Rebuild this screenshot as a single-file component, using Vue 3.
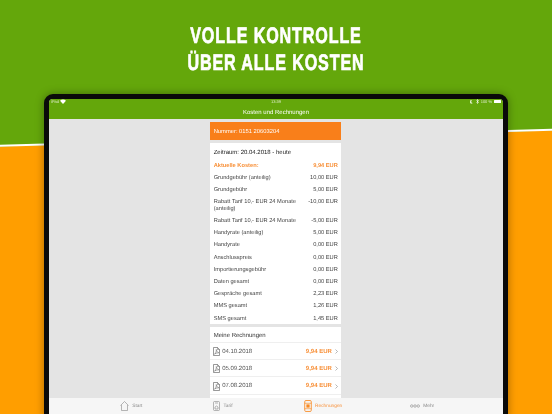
<script setup>
const rows = [
  { label: 'Grundgebühr (anteilig)', value: '10,00 EUR' },
  { label: 'Grundgebühr', value: '5,00 EUR' },
  { label: 'Rabatt Tarif 10,- EUR 24 Monate (anteilig)', value: '-10,00 EUR', tall: true },
  { label: 'Rabatt Tarif 10,- EUR 24 Monate', value: '-5,00 EUR' },
  { label: 'Handyrate (anteilig)', value: '5,00 EUR' },
  { label: 'Handyrate', value: '0,00 EUR' },
  { label: 'Anschlusspreis', value: '0,00 EUR' },
  { label: 'Importierungsgebühr', value: '0,00 EUR' },
  { label: 'Daten gesamt', value: '0,00 EUR' },
  { label: 'Gespräche gesamt', value: '2,23 EUR' },
  { label: 'MMS gesamt', value: '1,26 EUR' },
  { label: 'SMS gesamt', value: '1,45 EUR' }
]
const bills = ['04.10.2018', '05.09.2018', '07.08.2018']
</script>

<template>
  <div class="page">
    <svg class="backdrop" viewBox="0 0 552 414" preserveAspectRatio="none" aria-hidden="true">
      <rect width="552" height="414" fill="#64a70b" />
      <polygon points="0,146.500 552,130.500 552,414 0,414" fill="#ff9e00" />
      <polygon points="0,144.800 552,128.800 552,130.800 0,146.800" fill="#ffffff" />
    </svg>

    <h1 class="headline">VOLLE KONTROLLE<br />ÜBER ALLE KOSTEN</h1>

    <div class="tablet">
      <div class="screen">
        <header class="appbar">
          <div class="status">
            <span class="status-left">
              iPad
              <svg width="6" height="5" viewBox="0 0 12 10"><path d="M0 3.500C3.500 0 8.500 0 12 3.500L6 10Z" fill="#fff" /></svg>
            </span>
            <span class="status-time">13:39</span>
            <span class="status-right">
              <svg class="moon" width="3" height="4" viewBox="0 0 6 8"><path d="M4 0.500A3.500 3.500 0 1 0 5.500 6 3 3 0 0 1 4 0.500Z" fill="#dfeccb" /></svg>
              <svg width="3" height="5" viewBox="0 0 6 10"><path d="M1 2.500 5 7 3 9V1L5 3 1 7.500" fill="none" stroke="#fff" stroke-width="1.2" /></svg>
              100 %
              <i class="battery"></i>
            </span>
          </div>
          <div class="navtitle">Kosten und Rechnungen</div>
        </header>

        <main class="content">
          <div class="column">
            <div class="number">Nummer: 0151 20603204</div>

            <section class="card costs">
              <div class="period">Zeitraum: 20.04.2018 - heute</div>
              <div class="row accent"><span>Aktuelle Kosten:</span><span>9,94 EUR</span></div>
              <div v-for="r in rows" :key="r.label" class="row" :class="{ tall: r.tall }">
                <span class="row-label">{{ r.label }}</span><span class="row-value">{{ r.value }}</span>
              </div>
            </section>

            <section class="card bills">
              <div class="bills-title">Meine Rechnungen</div>
              <div v-for="b in bills" :key="b" class="bill">
                <svg class="pdf" width="7" height="9" viewBox="0 0 14 18">
                  <path d="M1 1h8l4 4v12H1Z" fill="#fff" stroke="#555" stroke-width="1.2" />
                  <path d="M9 1v4h4M3 14c3-1 4-6 3.500-9 1 3 2.500 6 5 6.500-3 0-6 1-8.500 2.500Z" fill="none" stroke="#555" stroke-width="1" />
                </svg>
                <span class="bill-date">{{ b }}</span>
                <span class="bill-price">9,94 EUR</span>
                <svg class="chev" width="3" height="5" viewBox="0 0 6 10"><path d="M1 1l4 4-4 4" fill="none" stroke="#888" stroke-width="1.2" /></svg>
              </div>
            </section>
          </div>
        </main>

        <nav class="tabs">
          <div class="tab">
            <svg width="9" height="10" viewBox="0 0 18 20"><path d="M1 9 9 1l8 8M3 8v11h12V8" fill="none" stroke="#888" stroke-width="1.2" /></svg>
            <span>Start</span>
          </div>
          <div class="tab">
            <svg width="7" height="10" viewBox="0 0 14 20"><rect x="1" y="1" width="12" height="18" rx="2" fill="none" stroke="#888" stroke-width="1.2" /><path d="M4 4h6M4 16v-4l3-2 3 2v4Z" fill="none" stroke="#888" stroke-width="1.2" /></svg>
            <span>Tarif</span>
          </div>
          <div class="tab active">
            <svg width="8" height="12" viewBox="0 0 14 22"><rect x="1" y="1" width="12" height="20" rx="2" fill="none" stroke="#f98a22" stroke-width="1.6" /><path d="M1 6h12M1 16h12" stroke="#f98a22" stroke-width="1.2" /><rect x="4" y="8" width="6" height="6" fill="#f98a22" /></svg>
            <span>Rechnungen</span>
          </div>
          <div class="tab">
            <svg width="10" height="4" viewBox="0 0 20 8"><circle cx="3.500" cy="4" r="2.500" fill="none" stroke="#888" stroke-width="1.2" /><circle cx="10" cy="4" r="2.500" fill="none" stroke="#888" stroke-width="1.2" /><circle cx="16.500" cy="4" r="2.500" fill="none" stroke="#888" stroke-width="1.2" /></svg>
            <span>Mehr</span>
          </div>
        </nav>
      </div>
    </div>
  </div>
</template>

<style>
html, body { margin: 0; padding: 0; }
</style>

<style scoped>
.page {
  position: relative;
  width: 552px;
  height: 414px;
  overflow: hidden;
  display: flex;
  flex-direction: column;
  font-family: "Liberation Sans", Arial, sans-serif;
  text-rendering: geometricPrecision;
}
.backdrop {
  position: absolute;
  inset: 0;
  width: 552px;
  height: 414px;
}
.headline {
  position: relative;
  flex: none;
  margin: 0;
  height: 93.500px;
  padding-top: 23.300px;
  box-sizing: border-box;
  text-align: center;
  font-size: 22.400px;
  line-height: 26.400px;
  font-weight: 700;
  letter-spacing: 1.200px;
  color: #fff;
  -webkit-text-stroke: 0.700px #fff;
  transform: scaleX(0.72);
  filter: blur(0.3px);
}
.tablet {
  position: relative;
  flex: none;
  margin-left: 44px;
  width: 464px;
  height: 330px;
  box-sizing: border-box;
  border: 5px solid #0a0a0a;
  border-radius: 9px;
  background: #e4e4e4;
  box-shadow: 0 0 9px rgba(0, 0, 0, 0.35);
  overflow: hidden;
}
.screen {
  height: 315.500px;
  display: flex;
  flex-direction: column;
  filter: blur(0.3px);
}
.appbar {
  flex: none;
  height: 20.500px;
  background: #64a70b;
  color: #fff;
  display: flex;
  flex-direction: column;
}
.status {
  height: 6px;
  padding: 0 2px;
  display: grid;
  grid-template-columns: 1fr auto 1fr;
  align-items: center;
  font-size: 4px;
  line-height: 6px;
  color: #dfeccb;
}
.status-left { display: flex; align-items: center; gap: 1px; }
.status-right { display: flex; align-items: center; justify-content: flex-end; gap: 1.500px; }
.moon { margin-right: 1.500px; }
.battery { width: 7.500px; height: 3px; background: #fff; border-radius: 0.500px; }
.navtitle {
  text-align: center;
  font-size: 6px;
  height: 14.500px;
  line-height: 16px;
  color: #fff;
}
.content {
  flex: 1;
  min-height: 0;
  overflow: hidden;
  display: flex;
  justify-content: center;
  padding-top: 3px;
  background: #e4e4e4;
}
.column {
  width: 131.700px;
  margin-left: -1px;
  display: flex;
  flex-direction: column;
  gap: 2.700px;
  font-size: 5.700px;
  color: #444;
}
.number {
  flex: none;
  height: 18px;
  line-height: 20px;
  padding-left: 4px;
  background: #f97f1a;
  color: #fff;
  font-size: 5.800px;
}
.card { flex: none; background: #fff; }
.costs { padding: 0 3.500px 0 4px; height: 181.300px; }
.period {
  height: 19px;
  line-height: 21px;
  color: #222;
  font-size: 6px;
}
.row {
  height: 12.200px;
  line-height: 14.200px;
  display: flex;
  justify-content: space-between;
  gap: 12px;
}
.row.tall { height: 19px; padding-top: 4px; box-sizing: border-box; line-height: 6.500px; }
.row-label { flex: 1; min-width: 0; max-width: 88px; }
.row-value { flex: none; }
.row.accent { color: #f8913a; font-weight: 700; height: 9px; line-height: 8px; }
.bills { flex: 1; }
.bills-title {
  height: 16px;
  line-height: 19px;
  box-sizing: border-box;
  padding-left: 4px;
  color: #333;
  font-size: 6px;
  border-bottom: 1px solid #efefef;
}
.bill {
  height: 17.300px;
  box-sizing: border-box;
  display: flex;
  align-items: center;
  padding: 1.500px 3.500px 0 3px;
  border-bottom: 1px solid #efefef;
  color: #555;
  font-size: 6px;
}
.pdf { flex: none; margin-right: 2.500px; }
.bill-date { flex: 1; }
.bill-price { color: #f8913a; font-weight: 700; margin-right: 3px; }
.tabs {
  flex: none;
  height: 16px;
  padding-left: 2px;
  background: #f6f6f6;
  display: flex;
  justify-content: center;
  align-items: center;
  gap: 70.500px;
  font-size: 4.800px;
  color: #888;
}
.tab { display: flex; align-items: center; gap: 3.500px; white-space: nowrap; }
.tab.active { color: #f8913a; margin-left: 1px; margin-right: -3px; gap: 3px; }
</style>
